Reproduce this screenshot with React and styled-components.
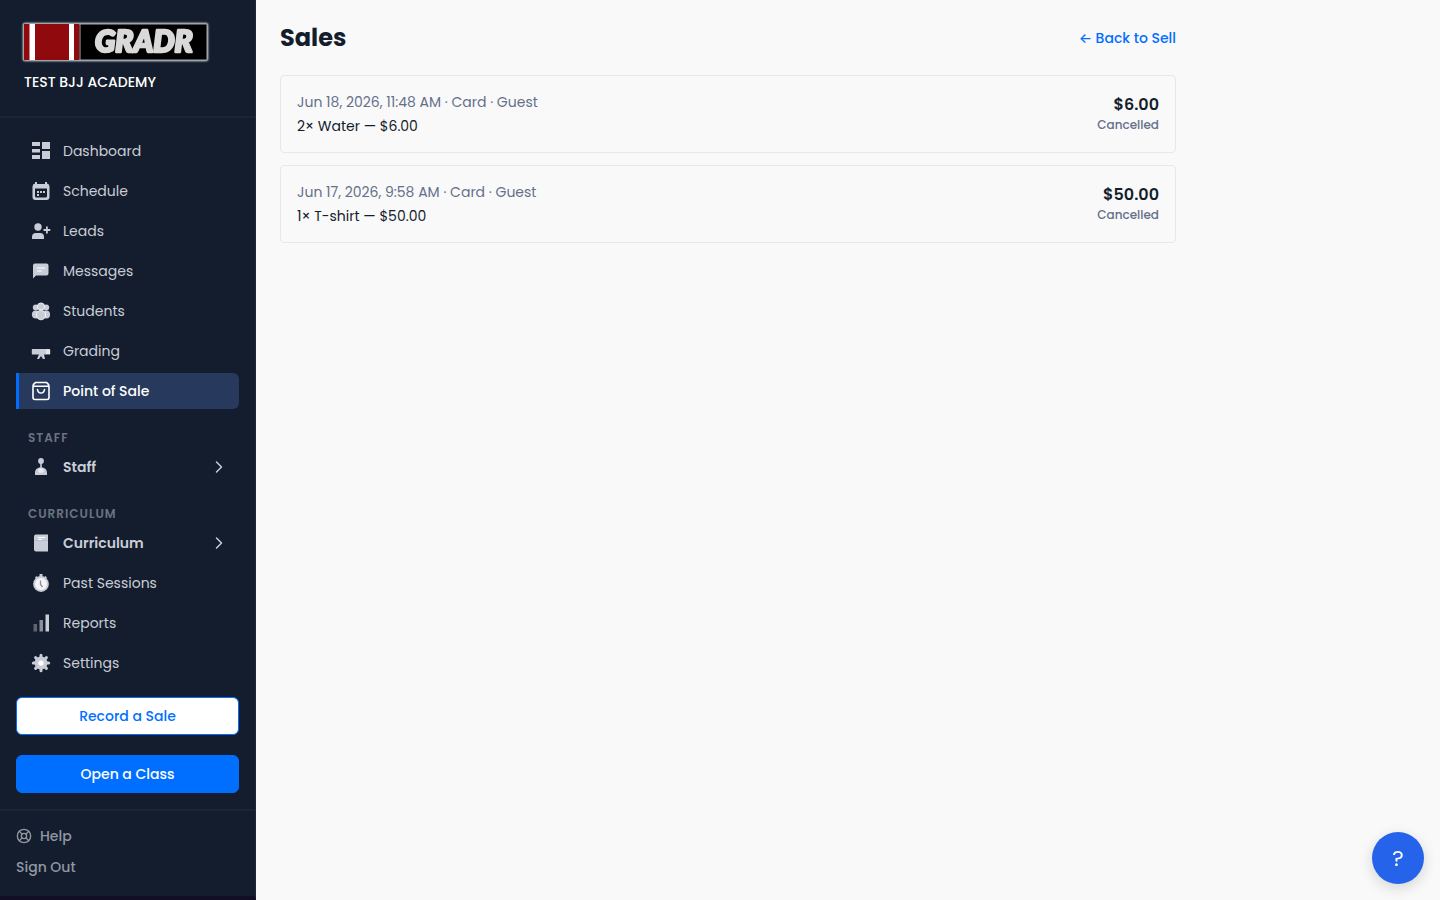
import styled, { createGlobalStyle, css } from 'styled-components';
import { ChevronRight, LifeBuoy } from 'lucide-react';

const GlobalStyle = createGlobalStyle`
  * {
    box-sizing: border-box;
  }

  body {
    margin: 0;
    background: #f9f9f9;
    color: #141d2d;
    font-family: Poppins, Inter, 'Open Sans', sans-serif;
    font-size: 14px;
  }

  button {
    font-family: inherit;
    cursor: pointer;
  }

  a {
    text-decoration: none;
  }
`;

const Page = styled.div`
  display: flex;
  min-height: 100vh;
`;

const Sidebar = styled.aside`
  display: flex;
  flex-direction: column;
  flex: 0 0 256px;
  background: #141d2d;
  border-right: 1px solid #1f2838;
  border-bottom: 4px solid #120e26;
`;

const Brand = styled.div`
  height: 118px;
  padding: 20px;
  border-bottom: 2px solid #1b2535;
`;

const Academy = styled.div`
  margin: 8px 4px 0;
  color: white;
  font-size: 14px;
  font-weight: 500;
  line-height: 20px;
`;

const Logo = styled.svg`
  display: block;
`;

const Nav = styled.nav`
  display: flex;
  flex-direction: column;
  gap: 4px;
  padding: 15px 16px 0;
`;

const rowStyle = css`
  display: flex;
  align-items: center;
  gap: 12px;
  height: 36px;
  padding: 0 10px 0 15px;
  border: 0;
  border-radius: 6px;
  background: none;
  color: #c9cdd8;
  font-size: 14px;
  text-align: left;

  > svg {
    flex: none;
  }
`;

const NavItem = styled.a`
  ${rowStyle}

  ${(props) =>
    props.$active &&
    `
    padding-left: 12px;
    border-left: 3px solid #006fff;
    border-radius: 0 6px 6px 0;
    background: #273a5d;
    color: white;
    font-weight: 500;
  `}
`;

const NavGroup = styled.button`
  ${rowStyle}
  font-weight: 600;
`;

const GroupName = styled.span`
  flex: 1;
`;

const SectionLabel = styled.div`
  margin-top: 18px;
  padding-left: 12px;
  color: #6b7280;
  font-size: 12px;
  font-weight: 600;
  letter-spacing: 1px;
  line-height: 14px;
`;

const Actions = styled.div`
  display: flex;
  flex-direction: column;
  gap: 20px;
  padding: 16px;
`;

const ActionButton = styled.button`
  height: 38px;
  border: 1px solid #006fff;
  border-radius: 6px;
  background: ${(props) => (props.$primary ? '#006fff' : 'white')};
  color: ${(props) => (props.$primary ? 'white' : '#006fff')};
  font-size: 14px;
  font-weight: 500;
`;

const SidebarFooter = styled.div`
  display: flex;
  flex: 1;
  flex-direction: column;
  align-items: flex-start;
  gap: 11px;
  padding: 15px 16px;
  border-top: 2px solid #1b2535;
`;

const footerItem = css`
  display: flex;
  align-items: center;
  gap: 8px;
  padding: 0;
  border: 0;
  background: none;
  color: #9197a3;
  font-size: 14px;
  font-weight: 500;
  line-height: 20px;
`;

const FooterLink = styled.a`
  ${footerItem}
`;

const SignOut = styled.button`
  ${footerItem}
`;

const Main = styled.main`
  flex: 1;
  padding: 20px 24px;
`;

const Content = styled.div`
  max-width: 896px;
`;

const PageHeader = styled.header`
  display: flex;
  align-items: center;
  justify-content: space-between;
  margin-bottom: 19px;
`;

const Title = styled.h1`
  margin: 0;
  font-size: 24px;
  font-weight: 700;
  line-height: 36px;
`;

const BackLink = styled.a`
  color: #006fff;
  font-weight: 500;
`;

const SaleList = styled.ul`
  display: flex;
  flex-direction: column;
  gap: 12px;
  margin: 0;
  padding: 0;
  list-style: none;
`;

const Sale = styled.li`
  display: flex;
  justify-content: space-between;
  padding: 14px 16px;
  border: 1px solid #e8e8ea;
  border-radius: 4px;
`;

const SaleMeta = styled.div`
  color: #65708a;
  line-height: 24px;
`;

const SaleLine = styled.div`
  line-height: 24px;
`;

const SaleSummary = styled.div`
  padding-top: 3px;
  text-align: right;
`;

const Amount = styled.div`
  font-size: 16px;
  font-weight: 600;
  line-height: 24px;
`;

const Status = styled.div`
  color: #65708a;
  font-size: 12px;
  font-weight: 500;
  line-height: 16px;
`;

const HelpButton = styled.button`
  position: fixed;
  right: 16px;
  bottom: 16px;
  width: 52px;
  height: 52px;
  padding: 0;
  border: 0;
  border-radius: 50%;
  background: #2563eb;
  box-shadow: 0 4px 14px rgba(0, 0, 0, 0.15);
  color: white;
  font-size: 22px;
`;

const icons = {
  dashboard: <path d="M1 1h8v4H1zM1 8h8v3.5H1zM1 14h8v4H1zM11 1h8v7h-8zM11 10h8v8h-8z" />,
  schedule: (
    <>
      <path
        fillRule="evenodd"
        d="M4 1h2v2h8V1h2v1.5a3 3 0 0 1 2.500 3V16a3 3 0 0 1-3 3h-11a3 3 0 0 1-3-3V5.500A3 3 0 0 1 4 2.500zM4 7.500V15q0 1.500 1.500 1.500h9q1.500 0 1.500-1.500V7.500z"
      />
      <path d="M6 10h2v2H6zM9 10h2v2H9zM12 10h2v2h-2zM6 13h2v2H6z" />
    </>
  ),
  leads: (
    <>
      <circle cx="7" cy="6" r="3.7" />
      <path d="M1 18v-2q0-4 4-4h4q4 0 4 4v2zM15 5.500h1.800V8h2.500v2h-2.500v2.500H15V10h-2.500V8H15z" />
    </>
  ),
  messages: (
    <>
      <path d="M4 2.500h11.500q2 0 2 2v8q0 2-2 2H5L2 17.500v-13q0-2 2-2z" />
      <path d="M6 7h8M6 10h5" stroke="#fff" strokeWidth="1.2" />
    </>
  ),
  students: (
    <>
      <circle cx="4.8" cy="6.5" r="3" />
      <circle cx="15.2" cy="6.5" r="3" />
      <ellipse cx="4.8" cy="13.5" rx="3.9" ry="4" />
      <ellipse cx="15.2" cy="13.5" rx="3.9" ry="4" />
      <circle cx="10" cy="5.5" r="3.6" stroke="#fff" strokeWidth=".8" />
      <ellipse cx="10" cy="14" rx="4.6" ry="4.8" stroke="#fff" strokeWidth=".8" />
    </>
  ),
  grading: (
    <>
      <path d="M1.500 8h17q.7 0 .7.700v4q0 .8-.7.800H13l1 4.500h-2l-2-3-2 3H6l2-4.500H1.500q-.7 0-.7-.8v-4q0-.7.7-.7z" />
      <path d="M16 8.500v4.500M18 8.500v4.500" stroke="#fff" strokeWidth="1" />
    </>
  ),
  sale: (
    <g fill="none" stroke="#fff" strokeWidth="1.6" strokeLinecap="round" strokeLinejoin="round">
      <path d="M4.500 1.500h11Q18 3 18 5.500v11a2 2 0 0 1-2 2H4a2 2 0 0 1-2-2v-11Q2 3 4.500 1.500zM2.500 5.300h15" />
      <path d="M6.500 8.500q.5 3.500 3.500 3.500t3.500-3.500" />
    </g>
  ),
  staff: (
    <>
      <circle cx="10" cy="4" r="2.9" />
      <path d="M9.200 5h1.600v5.500c3.200 0 5.200 2.300 5.200 5.500v2H4v-2c0-3.200 2-5.500 5.200-5.500z" />
      <ellipse cx="10" cy="13.5" rx="2.8" ry="2.3" fill="#e9eaf0" />
    </>
  ),
  curriculum: (
    <>
      <path d="M5 1.500h12v17H5q-2 0-2-2v-13q0-2 2-2z" />
      <path d="M3.500 7.500H17" stroke="#b8bbc9" />
      <path d="M7 4.500h7M7 6.500h4" stroke="#fff" />
    </>
  ),
  sessions: (
    <>
      <path d="M8.500 1h3v3h-3zM4 4.500L5.500 3 7 4.500 5.500 6zM16 4.500L14.500 3 13 4.500 14.500 6z" />
      <circle cx="10" cy="11" r="7.9" />
      <circle cx="10" cy="11" r="6" fill="#f4f5f8" />
      <path d="M9.500 7.500v4l2 2.500" fill="none" stroke="#8a90a0" strokeWidth="1.3" />
    </>
  ),
  reports: (
    <>
      <path d="M2.500 11H6v7.500H2.500z" opacity=".4" />
      <path d="M8.500 7H12v11.500H8.500z" opacity=".65" />
      <path d="M14.500 1.500H18v17h-3.500z" />
    </>
  ),
  settings: (
    <>
      <path
        d="M10 2.300v15.400M2.300 10h15.400M4.600 4.600l10.800 10.800M15.400 4.600L4.600 15.400"
        stroke="currentColor"
        strokeLinecap="round"
        strokeWidth="3"
      />
      <circle cx="10" cy="10" r="6.5" />
      <circle cx="10" cy="10" r="2.6" fill="#fff" />
    </>
  ),
};

function NavIcon({ name }) {
  return (
    <svg width="20" height="20" viewBox="0 0 20 20" fill="currentColor" aria-hidden="true">
      {icons[name]}
    </svg>
  );
}

function BrandLogo() {
  return (
    <Logo width="192" height="44" viewBox="0 0 192 44" role="img" aria-label="GRADR">
      <defs>
        <filter id="glow" x="-5%" y="-20%" width="110%" height="140%">
          <feGaussianBlur stdDeviation="1.2" />
        </filter>
        <filter id="soften">
          <feGaussianBlur stdDeviation=".5" />
        </filter>
      </defs>
      <rect x="3" y="3" width="185" height="38" rx="2" fill="#dfe3ea" filter="url(#glow)" />
      <rect x="3.5" y="4" width="183.5" height="36" fill="#000" stroke="#a4a6aa" />
      <path d="M4 4h55v36H4z" fill="#900a0d" />
      <path d="M9.500 4H15v36H9.500zM49 4h5v36h-5z" fill="#fff" />
      <path d="M60 4v36" stroke="#aaa" />
      <text
        x="75"
        y="32"
        fill="#d9d9d9"
        stroke="#d9d9d9"
        strokeWidth="2.5"
        strokeLinejoin="round"
        fontFamily="Lato, sans-serif"
        fontSize="30"
        fontStyle="italic"
        fontWeight="900"
        filter="url(#soften)"
      >
        GRADR
      </text>
    </Logo>
  );
}

const mainLinks = [
  { icon: 'dashboard', label: 'Dashboard' },
  { icon: 'schedule', label: 'Schedule' },
  { icon: 'leads', label: 'Leads' },
  { icon: 'messages', label: 'Messages' },
  { icon: 'students', label: 'Students' },
  { icon: 'grading', label: 'Grading' },
  { icon: 'sale', label: 'Point of Sale', active: true },
];

const moreLinks = [
  { icon: 'sessions', label: 'Past Sessions' },
  { icon: 'reports', label: 'Reports' },
  { icon: 'settings', label: 'Settings' },
];

const sales = [
  {
    id: 1,
    meta: 'Jun 18, 2026, 11:48 AM · Card · Guest',
    line: '2× Water — $6.00',
    total: '$6.00',
    status: 'Cancelled',
  },
  {
    id: 2,
    meta: 'Jun 17, 2026, 9:58 AM · Card · Guest',
    line: '1× T-shirt — $50.00',
    total: '$50.00',
    status: 'Cancelled',
  },
];

function NavLinks({ links }) {
  return links.map(({ icon, label, active }) => (
    <NavItem key={label} href="#" $active={active} aria-current={active ? 'page' : undefined}>
      <NavIcon name={icon} />
      {label}
    </NavItem>
  ));
}

function NavSection({ title, icon, label }) {
  return (
    <>
      <SectionLabel>{title}</SectionLabel>
      <NavGroup type="button" aria-expanded="false">
        <NavIcon name={icon} />
        <GroupName>{label}</GroupName>
        <ChevronRight size={20} strokeWidth={1.8} />
      </NavGroup>
    </>
  );
}

export default function App() {
  return (
    <Page>
      <GlobalStyle />
      <Sidebar>
        <Brand>
          <BrandLogo />
          <Academy>TEST BJJ ACADEMY</Academy>
        </Brand>
        <Nav>
          <NavLinks links={mainLinks} />
          <NavSection title="STAFF" icon="staff" label="Staff" />
          <NavSection title="CURRICULUM" icon="curriculum" label="Curriculum" />
          <NavLinks links={moreLinks} />
        </Nav>
        <Actions>
          <ActionButton type="button">Record a Sale</ActionButton>
          <ActionButton type="button" $primary>
            Open a Class
          </ActionButton>
        </Actions>
        <SidebarFooter>
          <FooterLink href="#">
            <LifeBuoy size={16} />
            Help
          </FooterLink>
          <SignOut type="button">Sign Out</SignOut>
        </SidebarFooter>
      </Sidebar>
      <Main>
        <Content>
          <PageHeader>
            <Title>Sales</Title>
            <BackLink href="#">← Back to Sell</BackLink>
          </PageHeader>
          <SaleList>
            {sales.map((sale) => (
              <Sale key={sale.id}>
                <div>
                  <SaleMeta>{sale.meta}</SaleMeta>
                  <SaleLine>{sale.line}</SaleLine>
                </div>
                <SaleSummary>
                  <Amount>{sale.total}</Amount>
                  <Status>{sale.status}</Status>
                </SaleSummary>
              </Sale>
            ))}
          </SaleList>
        </Content>
      </Main>
      <HelpButton type="button" aria-label="Help">
        ?
      </HelpButton>
    </Page>
  );
}
